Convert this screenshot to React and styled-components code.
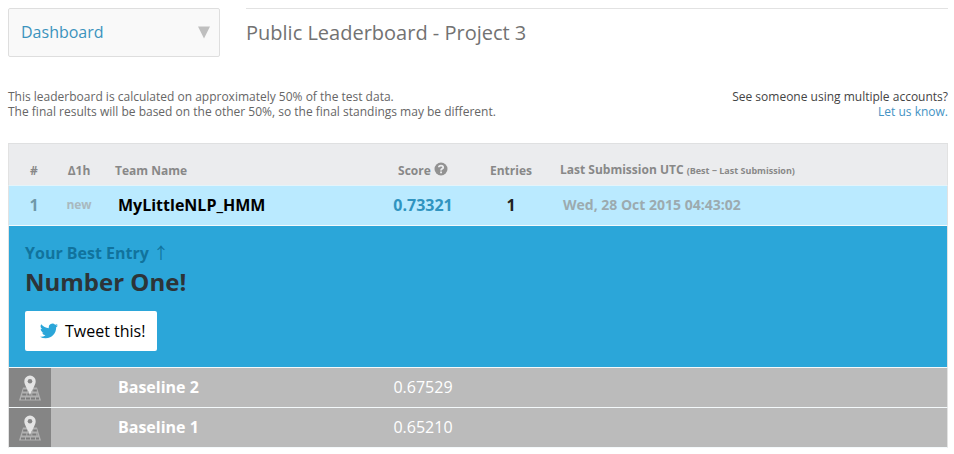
import React from "react";
import styled, { createGlobalStyle } from "styled-components";

const GlobalStyle = createGlobalStyle`
  * { box-sizing: border-box; }
  body {
    margin: 0;
    background: #fff;
    color: #333;
    font-family: "Open Sans", "Noto Sans", sans-serif;
    font-size: 16px;
  }
`;

const Page = styled.main`
  padding: 8px 6px 0 8px;
`;

const Header = styled.header`
  display: flex;
  gap: 26px;
  align-items: flex-start;
`;

const Picker = styled.div`
  display: grid;
  flex: 0 0 212px;
  height: 49px;
  align-items: center;
  background: #f9f9f9;
  border: 1px solid #dedede;
  border-radius: 2px;
`;

const PickerSelect = styled.select`
  grid-area: 1 / 1;
  width: 100%;
  height: 100%;
  padding: 0 36px 2px 12px;
  appearance: none;
  border: 0;
  background: transparent;
  color: #3c93bd;
  font: inherit;
`;

const PickerArrow = styled.svg`
  grid-area: 1 / 1;
  justify-self: end;
  margin-right: 9px;
  pointer-events: none;
`;

const Title = styled.h1`
  flex: 1;
  margin: 0;
  padding-top: 10px;
  border-top: 1px solid #e2e2e2;
  color: #727272;
  font-size: 20px;
  line-height: 28px;
  font-weight: 400;
`;

const Notes = styled.section`
  display: flex;
  justify-content: space-between;
  margin: 32px 0 24px;
  font-size: 12px;
  line-height: 15px;
`;

const Note = styled.p`
  margin: 0;
  color: ${(p) => (p.$dark ? "#444" : "#666")};
  text-align: ${(p) => (p.$dark ? "right" : "left")};
`;

const Link = styled.a`
  color: #4493c4;
  text-decoration: none;
`;

const Board = styled.table`
  width: 100%;
  table-layout: fixed;
  border-collapse: separate;
  border-spacing: 0;
`;

const HeadRow = styled.tr`
  height: 43px;
  background: #ebecee;
`;

const HeadCell = styled.th`
  padding: 12px 0 0 ${(p) => (p.$align ? 0 : 8)}px;
  border-top: 1px solid #dfe0e1;
  border-bottom: 1px solid #e4f4fa;
  color: #888;
  font-size: 12px;
  line-height: 16px;
  font-weight: 700;
  text-align: ${(p) => p.$align || "left"};
  white-space: nowrap;

  &:first-child { border-left: 1px solid #e2e2e2; padding-left: 8px; }
  &:last-child { border-right: 1px solid #e2e2e2; }
`;

const Small = styled.small`
  font-size: 9px;
`;

const HelpIcon = styled.svg`
  vertical-align: -1px;
`;

const Row = styled.tr`
  height: 40px;
  background: ${(p) => (p.$own ? "#baeaff" : "#bbb")};
  color: ${(p) => (p.$own ? "#000" : "#fff")};
`;

const Cell = styled.td`
  padding: 0 0 2px ${(p) => (p.$align ? 0 : 11)}px;
  border-bottom: 1px solid #f4f9fb;
  line-height: 22px;
  font-weight: ${(p) => (p.$bold ? 700 : 400)};
  font-size: ${(p) => p.$size || 16}px;
  color: ${(p) => p.$color || "inherit"};
  text-align: ${(p) => p.$align || "left"};
  white-space: nowrap;

  &:first-child { border-left: 1px solid #e2e2e2; }
  &:last-child { border-right: 1px solid #e2e2e2; }
`;

const RankCell = styled(Cell)`
  padding-left: 8px;
`;

const MarkerCell = styled(Cell)`
  padding: 0;
  background: #858585;
`;

const MarkerIcon = styled.svg`
  display: block;
  margin: 0 auto;
`;

const BestCell = styled.td`
  padding: 16px;
  border: solid #e2e2e2;
  border-width: 0 1px;
  border-bottom: 1px solid #f4f9fb;
  background: #2ba6d9;
  color: #2d3438;
`;

const BestLabel = styled.p`
  margin: 0;
  color: #11739d;
  font-weight: 700;
  line-height: 22px;
`;

const Arrow = styled.span`
  font-family: "Noto Sans CJK JP", sans-serif;
  font-weight: 400;
  line-height: 1;
`;

const BestHeading = styled.h2`
  margin: 0 0 12px;
  font-size: 24px;
  line-height: 35px;
`;

const TweetButton = styled.button`
  display: flex;
  gap: 7px;
  align-items: center;
  height: 40px;
  padding: 0 12px 0 15px;
  border: 0;
  border-radius: 2px;
  background: #fff;
  color: #000;
  font: inherit;
`;

const baselines = [
  { name: "Baseline 2", score: "0.67529" },
  { name: "Baseline 1", score: "0.65210" },
];

function Help() {
  return (
    <HelpIcon width="14" height="14" viewBox="0 0 14 14" role="img" aria-label="Help">
      <circle cx="7" cy="7" r="6.5" fill="#929292" />
      <path d="M4.8 5.3C4.9 3.1 9.2 3 9.2 5.4C9.2 6.9 7 6.7 7 8.4" fill="none" stroke="#ebecee" strokeWidth="1.8" />
      <path d="M6.1 9.4h1.9v1.8H6.1z" fill="#ebecee" />
    </HelpIcon>
  );
}

function Marker() {
  return (
    <MarkerIcon width="24" height="26" viewBox="0 0 24 26" role="img" aria-label="Baseline">
      <path d="M5 12.5h14L23 25.5H1z" fill="#b0b0b0" />
      <path
        d="M5.2 15.5h13.6M4.3 19.5h15.4M3 23.4h18"
        fill="none"
        stroke="#7c7c7c"
        strokeWidth="2"
        strokeDasharray="4 1"
      />
      <path d="M12 20.5C10.8 15.5 6.3 10.7 6.3 6.3a5.7 5.7 0 0 1 11.4 0C17.7 10.7 13.2 15.5 12 20.5z" fill="#e4e4e4" />
      <circle cx="12" cy="6.2" r="2.3" fill="#858585" />
    </MarkerIcon>
  );
}

function Bird() {
  return (
    <svg width="18" height="18" viewBox="0 0 24 24" fill="#2ba6d9" aria-hidden="true">
      <path d="M23.95 4.57a10 10 0 0 1-2.82.77 4.96 4.96 0 0 0 2.16-2.72c-.95.55-2 .96-3.13 1.18a4.92 4.92 0 0 0-8.38 4.48C7.69 8.1 4.07 6.13 1.64 3.16a4.92 4.92 0 0 0 1.52 6.57 4.9 4.9 0 0 1-2.23-.61v.06c0 2.39 1.7 4.38 3.95 4.83a5 5 0 0 1-2.21.08 4.94 4.94 0 0 0 4.6 3.42A9.87 9.87 0 0 1 0 19.54a14 14 0 0 0 7.55 2.21c9.05 0 14-7.5 14-13.98 0-.21 0-.42-.02-.63a9.94 9.94 0 0 0 2.42-2.57z" />
    </svg>
  );
}

export default function App() {
  return (
    <Page>
      <GlobalStyle />
      <Header>
        <Picker>
          <PickerSelect aria-label="Section" defaultValue="Dashboard">
            <option>Dashboard</option>
          </PickerSelect>
          <PickerArrow width="12" height="13" viewBox="0 0 12 13" aria-hidden="true">
            <path d="M0 0.5h12L6 12.5z" fill="#bfbfbf" />
          </PickerArrow>
        </Picker>
        <Title>Public Leaderboard - Project 3</Title>
      </Header>
      <Notes>
        <Note>
          This leaderboard is calculated on approximately 50% of the test data.
          <br />
          The final results will be based on the other 50%, so the final standings may be different.
        </Note>
        <Note $dark>
          See someone using multiple accounts?
          <br />
          <Link href="#report">Let us know.</Link>
        </Note>
      </Notes>
      <Board>
        <colgroup>
          <col width="43" />
          <col width="56" />
          <col />
          <col width="94" />
          <col width="82" />
          <col width="396" />
        </colgroup>
        <thead>
          <HeadRow>
            <HeadCell $align="center" scope="col">#</HeadCell>
            <HeadCell $align="center" scope="col">Δ1h</HeadCell>
            <HeadCell scope="col">Team Name</HeadCell>
            <HeadCell $align="center" scope="col">Score <Help /></HeadCell>
            <HeadCell $align="center" scope="col">Entries</HeadCell>
            <HeadCell scope="col">
              Last Submission UTC <Small>(Best − Last Submission)</Small>
            </HeadCell>
          </HeadRow>
        </thead>
        <tbody>
          <Row $own>
            <RankCell $align="center" $bold $color="#6f98a8">1</RankCell>
            <Cell $align="center" $bold $size={12} $color="#a9b9c0">new</Cell>
            <Cell $bold>MyLittleNLP_HMM</Cell>
            <Cell $align="center" $bold $color="#3094c0">0.73321</Cell>
            <Cell $align="center" $bold $color="#222">1</Cell>
            <Cell $bold $size={14} $color="#9caaaf">Wed, 28 Oct 2015 04:43:02</Cell>
          </Row>
          <tr>
            <BestCell colSpan={6}>
              <BestLabel>Your Best Entry <Arrow>↑</Arrow></BestLabel>
              <BestHeading>Number One!</BestHeading>
              <TweetButton type="button"><Bird />Tweet this!</TweetButton>
            </BestCell>
          </tr>
          {baselines.map((b) => (
            <Row key={b.name}>
              <MarkerCell $align="center"><Marker /></MarkerCell>
              <Cell />
              <Cell $bold>{b.name}</Cell>
              <Cell $align="center">{b.score}</Cell>
              <Cell />
              <Cell />
            </Row>
          ))}
        </tbody>
      </Board>
    </Page>
  );
}
